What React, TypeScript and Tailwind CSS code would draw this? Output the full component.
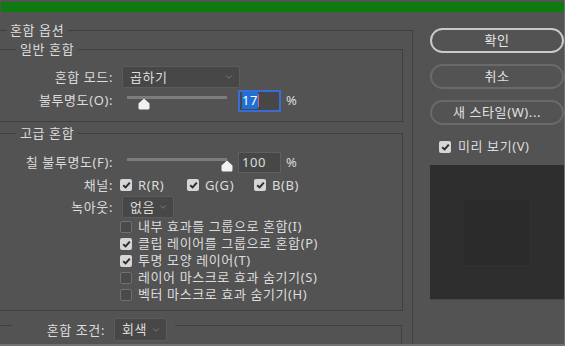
import { ChevronDown } from "lucide-react";

function Check({ checked }: { checked?: boolean }) {
  if (checked) {
    return (
      <span className="flex h-[12px] w-[12px] shrink-0 items-center justify-center rounded-[2px] bg-[#d6d6d6]">
        <svg width="9" height="8" viewBox="0 0 9 8">
          <path d="M1.2 4.2 L3.6 6.4 L7.8 1.6" fill="none" stroke="#2e2e2e" strokeWidth="2" />
        </svg>
      </span>
    );
  }
  return <span className="h-[12px] w-[12px] shrink-0 rounded-[2px] border border-[#707070] bg-[#4a4a4a]" />;
}

function Select({ value, width }: { value: string; width: string }) {
  return (
    <div
      className={
        "flex h-[22px] items-center justify-between rounded-[2px] border border-[#5b5b5b] bg-[#474747] pl-[7px] pr-[5px] " +
        width
      }
    >
      <span>{value}</span>
      <ChevronDown size={10} strokeWidth={1.5} className="text-[#9a9a9a]" />
    </div>
  );
}

function Slider({ value }: { value: number }) {
  return (
    <div className="relative h-[21px] w-[100px]">
      <div className="absolute left-0 right-0 top-[6px] h-[3px] bg-[#7c7c7c]" />
      <svg className="absolute top-[8px]" style={{ left: value - 6 }} width="12" height="12" viewBox="0 0 12 12">
        <path d="M6 0.5 L11.5 5.5 V10 Q11.5 11.5 10 11.5 H2 Q0.5 11.5 0.5 10 V5.5 Z" fill="#f2f2f2" />
      </svg>
    </div>
  );
}

function Label({ children }: { children: React.ReactNode }) {
  return <span className="w-[115px] shrink-0 pr-[2px] text-right">{children}</span>;
}

const options = [
  { text: "내부 효과를 그룹으로 혼합(I)", checked: false },
  { text: "클립 레이어를 그룹으로 혼합(P)", checked: true },
  { text: "투명 모양 레이어(T)", checked: true },
  { text: "레이어 마스크로 효과 숨기기(S)", checked: false },
  { text: "벡터 마스크로 효과 숨기기(H)", checked: false },
];

const channels = ["R(R)", "G(G)", "B(B)"];

export default function App() {
  return (
    <div className="h-[346px] w-[565px] overflow-hidden border-r border-b-2 border-[#727272] bg-[#535353] pt-[2px] font-['Noto_Sans','Noto_Sans_CJK_KR',sans-serif] text-[13px] leading-[17px] tracking-[0.6px] text-[#dcdcdc]">
      <div className="ml-px h-[10px] bg-[#0f7a0f]" />

      <div className="flex">
        {/* left: blend options */}
        <fieldset className="mt-[10px] w-[413px] shrink-0 border border-l-0 border-[#3f3f3f] pr-[9px] pb-[10px]">
          <legend className="ml-[6px] px-[4px]">혼합 옵션</legend>

          <fieldset className="mt-[2px] border border-l-0 border-[#3f3f3f] pb-[10px]">
            <legend className="ml-[16px] px-[4px]">일반 혼합</legend>
            <div className="mt-[8px] flex h-[22px] items-center">
              <Label>혼합 모드:</Label>
              <div className="ml-[7px]">
                <Select value="곱하기" width="w-[118px]" />
              </div>
            </div>
            <div className="mt-[2px] flex h-[21px] items-center">
              <Label>불투명도(O):</Label>
              <div className="ml-[12px]">
                <Slider value={17} />
              </div>
              <div className="ml-[11px] flex h-[22px] w-[43px] items-center border-2 border-[#3b6cd3] bg-[#474747] pl-[2px]">
                <span className="bg-[#1f6fd6] text-white">17</span>
                <span className="h-[13px] w-px bg-[#e05a6a]" />
              </div>
              <span className="ml-[5px]">%</span>
            </div>
          </fieldset>

          <fieldset className="mt-[3px] border border-l-0 border-[#3f3f3f] pb-[7px]">
            <legend className="ml-[16px] px-[4px]">고급 혼합</legend>
            <div className="mt-[10px] flex h-[21px] items-center">
              <Label>칠 불투명도(F):</Label>
              <div className="ml-[12px]">
                <Slider value={100} />
              </div>
              <div className="ml-[11px] flex h-[21px] w-[43px] items-center border border-[#5f5f5f] bg-[#474747] pl-[3px]">
                100
              </div>
              <span className="ml-[5px]">%</span>
            </div>
            <div className="mt-px flex h-[22px] items-center">
              <Label>채널:</Label>
              <div className="ml-[5px] flex">
                {channels.map((c) => (
                  <div key={c} className="flex w-[67px] items-center gap-[6px]">
                    <Check checked />
                    <span>{c}</span>
                  </div>
                ))}
              </div>
            </div>
            <div className="flex h-[22px] items-center">
              <Label>녹아웃:</Label>
              <div className="ml-[7px]">
                <Select value="없음" width="w-[52px]" />
              </div>
            </div>
            <div className="pl-[120px]">
              {options.map((o) => (
                <div key={o.text} className="flex h-[17px] items-center gap-[6px]">
                  <Check checked={o.checked} />
                  <span>{o.text}</span>
                </div>
              ))}
            </div>
          </fieldset>

          <div className="mt-[7px] flex h-[30px] items-start">
            <div className="mt-[7px] w-[12px] border-t border-[#3f3f3f]" />
            <span className="mt-[4px] w-[95px] pr-[2px] text-right">혼합 조건:</span>
            <div className="ml-[7px]">
              <Select value="회색" width="w-[53px] h-[23px]" />
            </div>
            <div className="mt-[7px] ml-[8px] mr-px h-[30px] flex-1 border-t border-r border-[#3f3f3f]" />
          </div>
        </fieldset>

        {/* right: buttons + preview */}
        <div className="mt-[16px] flex flex-1 flex-col pl-[17px]">
          <button className="h-[25px] w-[134px] rounded-full border-2 border-[#c9c9c9] text-[#e6e6e6]">확인</button>
          <button className="mt-[11px] h-[25px] w-[134px] rounded-full border-2 border-[#6a6a6a] text-[#e0e0e0]">취소</button>
          <button className="mt-[11px] h-[25px] w-[134px] rounded-full border-2 border-[#6a6a6a] text-[#e0e0e0]">
            새 스타일(W)...
          </button>
          <div className="mt-[13px] flex h-[17px] items-center gap-[7px] pl-[9px]">
            <Check checked />
            <span>미리 보기(V)</span>
          </div>
          <div className="mt-[10px] flex h-[135px] items-center justify-center border-b border-[#474747] bg-[#2e2e2e]">
            <div className="h-[67px] w-[68px] border border-[#303030] bg-[#2b2b2b]" />
          </div>
        </div>
      </div>
    </div>
  );
}
